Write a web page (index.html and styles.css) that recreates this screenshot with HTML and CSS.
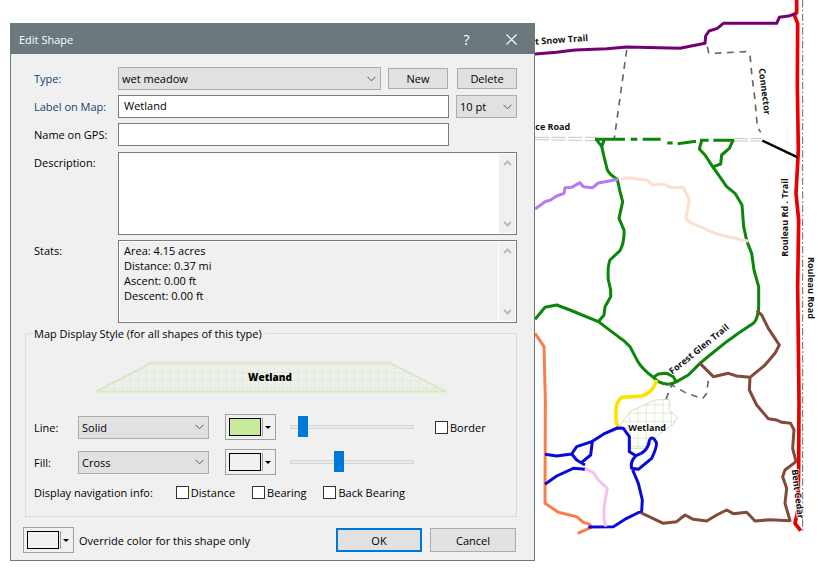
FILE: index.html
```html
<!DOCTYPE html>
<html lang="en">
<head>
<meta charset="utf-8">
<title>Edit Shape</title>
<link rel="stylesheet" href="styles.css">
</head>
<body>
<form class="dialog" role="dialog" aria-labelledby="dialog-title">
  <header class="titlebar">
    <h1 id="dialog-title" class="title">Edit Shape</h1>
    <button type="button" class="title-button" aria-label="Help">?</button>
    <button type="button" class="title-button" aria-label="Close">
      <svg width="11" height="11" viewBox="0 0 11 11"><path d="M.5.5l10 10M10.500.5l-10 10" fill="none" stroke="#fff" stroke-width="1.2"/></svg>
    </button>
  </header>
  <div class="content">
    <div class="fields">
      <div class="row">
        <label class="caption link" for="type">Type:</label>
        <select id="type" class="combo grow"><option>wet meadow</option></select>
        <div class="actions">
          <button type="button" class="button">New</button>
          <button type="button" class="button">Delete</button>
        </div>
      </div>
      <div class="row">
        <label class="caption link" for="map-label">Label on Map:</label>
        <input id="map-label" class="textbox grow" type="text" value="Wetland">
        <select class="combo size" aria-label="Label size"><option>10 pt</option></select>
      </div>
      <div class="row">
        <label class="caption" for="gps">Name on GPS:</label>
        <input id="gps" class="textbox grow" type="text">
        <span class="size"></span>
      </div>
    </div>
    <div class="row top">
      <label class="caption" for="description">Description:</label>
      <div class="memo grow">
        <textarea id="description"></textarea>
        <div class="scroll">
          <svg width="9" height="6" viewBox="0 0 9 6"><path d="M1 5l3.500-3.500L8 5"/></svg>
          <svg width="9" height="6" viewBox="0 0 9 6"><path d="M1 1l3.500 3.500L8 1"/></svg>
        </div>
      </div>
    </div>
    <div class="row top">
      <label class="caption" for="stats">Stats:</label>
      <div class="memo grow">
        <textarea id="stats" class="readonly" readonly>Area: 4.15 acres
Distance: 0.37 mi
Ascent: 0.00 ft
Descent: 0.00 ft</textarea>
        <div class="scroll">
          <svg width="9" height="6" viewBox="0 0 9 6"><path d="M1 5l3.500-3.500L8 5"/></svg>
          <svg width="9" height="6" viewBox="0 0 9 6"><path d="M1 1l3.500 3.500L8 1"/></svg>
        </div>
      </div>
    </div>
    <fieldset class="group">
      <legend>Map Display Style (for all shapes of this type)</legend>
      <svg class="preview" width="354" height="34" viewBox="0 0 354 34">
        <defs><pattern id="cross" width="8" height="8" patternUnits="userSpaceOnUse"><path d="M0 4.500h8M4.500 0v8" stroke="#e0ead4" fill="none"/></pattern></defs>
        <path d="M2 31.500L58 2.500h237L352 31.500z" fill="#eef0ec"/>
        <path d="M2 31.500L58 2.500h237L352 31.500z" fill="url(#cross)" stroke="#d9e9c8" stroke-width="2"/>
        <text x="176" y="21" text-anchor="middle">Wetland</text>
      </svg>
      <div class="row style">
        <label class="short" for="line">Line:</label>
        <select id="line" class="combo kind"><option>Solid</option></select>
        <button type="button" class="color" aria-label="Line color"><span class="swatch green"></span><span class="drop"></span></button>
        <input class="slider" type="range" min="0" max="100" value="6" aria-label="Line width">
        <label class="check"><input type="checkbox">Border</label>
      </div>
      <div class="row style">
        <label class="short" for="fill">Fill:</label>
        <select id="fill" class="combo kind"><option>Cross</option></select>
        <button type="button" class="color" aria-label="Fill color"><span class="swatch"></span><span class="drop"></span></button>
        <input class="slider" type="range" min="0" max="100" value="38" aria-label="Fill opacity">
      </div>
      <div class="row nav">
        <span>Display navigation info:</span>
        <label class="check"><input type="checkbox">Distance</label>
        <label class="check"><input type="checkbox">Bearing</label>
        <label class="check"><input type="checkbox">Back Bearing</label>
      </div>
    </fieldset>
    <footer class="footer">
      <button type="button" id="override" class="color"><span class="swatch"></span><span class="drop"></span></button>
      <label class="grow" for="override">Override color for this shape only</label>
      <button type="submit" class="button wide primary">OK</button>
      <button type="button" class="button wide">Cancel</button>
    </footer>
  </div>
</form>
<main class="map">
  <svg viewBox="15 0 849 1740" preserveAspectRatio="xMinYMin meet" role="img" aria-label="Trail map">
    <defs><pattern id="meadow" x="12" y="2" width="25" height="25" patternUnits="userSpaceOnUse"><path d="M0 12h25M12 0v25" stroke="#cfe3b8" stroke-width="2" fill="none"/></pattern></defs>
    <g class="road">
      <path d="M15 412H200M612 416H695" stroke-dasharray="42 8"/>
      <path d="M15 419L200 422M612 423H695" stroke-dasharray="42 8"/>
      <path d="M818 0V1592" stroke="#666" stroke-width="3" stroke-dasharray="22 7 5 7"/>
    </g>
    <path d="M265 1282L300 1235 335 1218 375 1200 415 1198 420 1210 416 1228 443 1253 430 1272 385 1305 360 1335 345 1345H300V1285z" fill="url(#meadow)" stroke="#bcd2a4" stroke-width="2"/>
    <g class="path">
      <path d="M290 150L253 415M532 140L536 158 550 160 648 155 660 165 665 220 675 300 682 380 692 397"/>
      <path d="M408 1197L425 1155 470 1180 518 1196 530 1180 535 1140"/>
    </g>
    <g class="trail">
      <path stroke="#e80000" stroke-width="11" d="M800 0V38L793 46 803 70 802 260 805 450 803 490 798 580 806 660 803 860 807 1200 806 1400 804 1530 795 1570 812 1592"/>
      <path stroke="#740174" d="M15 162L80 157 135 150 230 146 290 141 450 145 525 130 527 108 537 93 562 85 580 70 740 70 748 52 780 47 797 40"/>
      <path stroke="#000" stroke-width="7" d="M697 422L803 472"/>
      <path stroke="#0b860b" d="M195 418H285M302 418H322M338 418H392M412 429H428M443 431L498 424M510 421H536M550 421H612M199 419L215 439 223 419M215 439L222 470 232 510Q240 525 262 538L270 575 278 605 267 655 282 690Q284 725 270 752L240 780Q232 800 235 840L242 870V890L225 920 222 945 205 965"/>
      <path stroke="#0b860b" d="M515 422L508 447 525 465 548 500 590 560 615 580 636 615 641 680 650 722 665 760 672 810 686 860V925Q682 960 670 970L625 1000 590 1025 540 1065 510 1090 475 1125 440 1145Q415 1160 385 1145L370 1132Q335 1105 322 1082L300 1040Q285 1022 265 1010L205 965 120 930 80 915 45 922 15 958M610 419L598 445 575 465 572 492 550 500M370 1132L385 1122 410 1120 430 1130 438 1145"/>
      <path stroke="#b57cf2" d="M15 627L45 605 62 600 80 588 102 580 105 563 125 562 150 548 160 560 188 563 205 549 265 538"/>
      <path stroke="#fbe0d0" d="M272 537L290 533 352 541 368 555 400 552 425 563 460 562 478 600 468 655 480 667 500 675 560 702 655 724"/>
      <path stroke="#83493a" d="M680 932L695 945 715 985 748 1035 735 1060 705 1095 660 1132 658 1170 680 1215 715 1256 740 1260 755 1267 782 1270 792 1290 788 1345 798 1385 765 1410 758 1430 770 1465 765 1510 780 1562 720 1559 675 1563 650 1537 610 1541 590 1530 560 1545 530 1563 490 1558 465 1545 440 1565 400 1570 332 1538M660 1132L620 1128 595 1120 550 1130 510 1090"/>
      <path stroke="#fa7d4b" d="M15 1000L42 1040 46 1200 45 1510 85 1537 140 1550 160 1567 180 1573 182 1583 143 1600"/>
      <path stroke="#fbe400" stroke-width="11" d="M380 1140Q368 1180 335 1188L275 1192Q260 1205 258 1225V1265L265 1284"/>
      <path stroke="#0909dc" d="M45 1363L80 1368 125 1362 140 1340 185 1325 225 1300 262 1284 280 1285 298 1310V1355L318 1367Q355 1355 358 1322Q366 1305 378 1325Q384 1335 365 1375L325 1408 305 1405Q300 1385 318 1367M308 1410L325 1450 337 1500 335 1533 290 1555 250 1580 175 1581M125 1362L140 1380 165 1395M165 1408L130 1405 80 1428 45 1453M187 1325L182 1365 155 1387"/>
      <path stroke="#f8c0ea" d="M165 1405L190 1418 205 1440 232 1465 222 1520V1560L228 1580"/>
    </g>
    <g class="names">
      <text transform="translate(16 134) rotate(-4)">t Snow Trail</text>
      <text x="16" y="391">ce Road</text>
      <text transform="translate(686 206) rotate(83)">Connector</text>
      <text transform="translate(773 770) rotate(-90)">Rouleau Rd . Trail</text>
      <text transform="translate(834 771) rotate(90)">Rouleau Road</text>
      <text transform="translate(427 1124) rotate(-39)">Forest Glen Trail</text>
      <text transform="translate(785 1409) rotate(83)">Bent Cedar</text>
      <text x="295" y="1294">Wetland</text>
    </g>
  </svg>
</main>
</body>
</html>
```
FILE: styles.css
```css
* { box-sizing: border-box; }

body {
  margin: 0;
  min-height: 100vh;
  display: flex;
  align-items: flex-start;
  background: #fff;
  color: #000;
  font: 11px/15px "Open Sans", "Noto Sans", sans-serif;
}

button, input, select, textarea { font: inherit; color: inherit; margin: 0; }

.dialog {
  flex: 0 1 525px;
  margin: 23px 0 19px 10px;
  border: 1px solid #6c797c;
  background: #f0f0f0;
}

.titlebar {
  display: flex;
  align-items: center;
  height: 30px;
  padding-left: 8px;
  background: #6b797d;
  color: #fff;
}
.title { flex: 1; margin: 0; font-size: 11px; font-weight: 400; }
.title-button {
  width: 45px;
  height: 30px;
  padding: 0;
  border: 0;
  background: none;
  font-size: 14px;
}

.content { padding: 13px 17px 7px 23px; }
.fields { display: grid; gap: 5px; margin-bottom: 6px; }
.row { display: flex; align-items: center; }
.row.top { align-items: flex-start; margin-bottom: 5px; }
.row.top .caption { padding-top: 3px; }
.caption { width: 84px; white-space: nowrap; }
.link { color: #17426e; }
.grow { flex: 1; min-width: 0; }

.combo {
  appearance: none;
  height: 23px;
  padding: 0 20px 0 3px;
  border: 1px solid #adadad;
  border-radius: 0;
  background: #e1e1e1 url("data:image/svg+xml,%3Csvg xmlns='http://www.w3.org/2000/svg' width='9' height='6'%3E%3Cpath d='M.5 .8l4 4 4-4' fill='none' stroke='%23555'/%3E%3C/svg%3E") no-repeat right 4px center;
}
.textbox {
  height: 23px;
  padding: 0 5px 2px;
  border: 1px solid #7a7a7a;
  background: #fff;
}
.size { width: 61px; margin-left: 7px; }
.actions { display: flex; gap: 9px; margin-left: 7px; }
.button {
  width: 60px;
  height: 21px;
  padding: 0;
  border: 1px solid #adadad;
  background: #e1e1e1;
}
.button.wide { width: 86px; height: 24px; margin-right: 1px; }
.button.primary { margin-right: 8px; border: 2px solid #0078d7; }

.memo {
  display: flex;
  gap: 1px;
  height: 83px;
  padding: 1px;
  border: 1px solid #7a7a7a;
  background: #fff;
}
.memo textarea {
  flex: 1;
  min-width: 0;
  padding: 1px 4px;
  border: 0;
  resize: none;
  overflow: hidden;
  background: none;
}
.memo .readonly { background: #f0f0f0; }
.scroll {
  display: flex;
  flex-direction: column;
  justify-content: space-between;
  align-items: center;
  width: 16px;
  padding: 6px 0;
  background: #f0f0f0;
}
.scroll path { fill: none; stroke: #bcbcbc; stroke-width: 2; }

.group {
  min-width: 0;
  margin: -2px 0 0 -9px;
  padding: 0 8px 16px;
  border: 1px solid #dcdcdc;
}
.group legend { padding: 0 3px 0 1px; margin-left: -1px; }
.preview { display: block; margin: 19px auto 20px 60px; max-width: 100%; }
.preview text { font: 800 10px "Open Sans", sans-serif; }
.style { margin-bottom: 9px; }
.short { width: 44px; }
.kind { width: 131px; margin-right: 16px; }

.color {
  display: flex;
  align-items: center;
  justify-content: space-between;
  width: 51px;
  height: 26px;
  padding: 3px;
  border: 1px solid #a0a0a0;
  background: #f0f0f0;
}
.swatch { width: 32px; height: 18px; border: 1px solid #000; background: #f0f0f0; }
.green { background: #c8eb9b; }
.drop {
  display: flex;
  align-items: center;
  justify-content: center;
  width: 10px;
  height: 18px;
  border-left: 1px solid #a0a0a0;
}
.drop::after {
  content: "";
  border: 3px solid transparent;
  border-top-color: #000;
  border-bottom: 0;
}

.slider {
  appearance: none;
  width: 124px;
  height: 21px;
  margin: 0 21px 0 14px;
  background: none;
}
.slider::-webkit-slider-runnable-track {
  height: 4px;
  border: 1px solid #d6d6d6;
  background: #e7eaea;
}
.slider::-webkit-slider-thumb {
  appearance: none;
  width: 10px;
  height: 21px;
  margin-top: -10px;
  background: #0078d7;
}

.check { display: flex; align-items: center; gap: 2px; }
.check input {
  appearance: none;
  width: 13px;
  height: 13px;
  border: 1px solid #333;
  background: #fff;
}
.nav { gap: 17px; padding-top: 1px; }
.nav span { margin-right: 6px; }

.footer { display: flex; align-items: center; margin: 10px 0 0 -11px; }
.footer label { padding-left: 5px; }

.map { flex: 1; min-width: 0; height: 100vh; }
.map svg { display: block; width: 100%; height: 100%; }
.road { fill: none; stroke: #aaa; stroke-width: 2; }
.path { fill: none; stroke: #666; stroke-width: 5; stroke-dasharray: 20 17; }
.trail { fill: none; stroke-width: 9; stroke-linejoin: round; }
.names {
  font: 700 27px "Open Sans", sans-serif;
  fill: #111;
  stroke: #fff;
  stroke-width: 4;
  paint-order: stroke;
}
```
